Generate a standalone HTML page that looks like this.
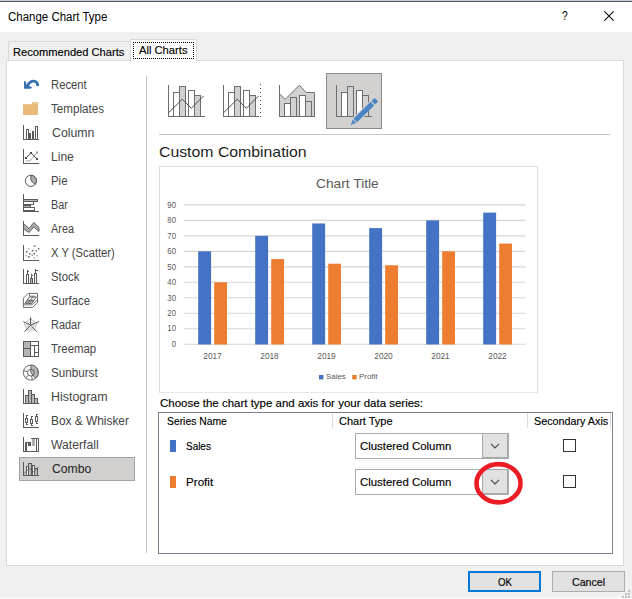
<!DOCTYPE html>
<html><head><meta charset="utf-8"><title>Change Chart Type</title>
<style>
*{box-sizing:border-box;margin:0;padding:0}
html,body{width:632px;height:599px;overflow:hidden;background:#f0f0f0}
body{position:relative;font-family:"Liberation Sans",sans-serif;font-size:12px;color:#000}
.a{position:absolute;white-space:pre;line-height:1}
.t{position:absolute;white-space:pre;line-height:14px;height:14px;font-size:11px;-webkit-text-stroke:0.15px currentColor}
.li{position:absolute;left:51px;white-space:pre;line-height:14px;height:14px;color:#444;font-size:12px}
.ax{position:absolute;left:159.500px;width:16px;text-align:right;white-space:pre;line-height:10px;height:10px;transform-origin:100% 50%;transform:scaleX(0.94);font-size:8.3px;color:#595959}
.yr{position:absolute;top:351px;width:41px;text-align:center;white-space:pre;line-height:10px;height:10px;font-size:8.3px;color:#595959}
.lg{position:absolute;top:372px;white-space:pre;line-height:10px;height:10px;font-size:7.9px;color:#595959}
</style></head><body>
<!-- window chrome -->
<div class="a" style="left:0;top:0;width:632px;height:1px;background:#c5cde0"></div>
<div class="a" style="left:0;top:1px;width:632px;height:1px;background:#585858"></div>
<div class="a" style="left:0;top:2px;width:632px;height:30px;background:#fff"></div>
<div class="t" id="title" style="left:8px;top:10px;font-size:12px;-webkit-text-stroke:0;transform-origin:0 0;transform:scaleX(0.9567);margin-left:0.00px">Change Chart Type</div>
<div class="t" style="left:562px;top:9px;font-size:13px;-webkit-text-stroke:0;transform-origin:0 0;transform:scaleX(0.8)">?</div>
<svg class="a" style="left:604px;top:11px" width="10" height="10" viewBox="0 0 10 10"><path d="M0.300 0.300L9.700 9.700M9.700 0.300L0.300 9.700" stroke="#111" stroke-width="1.100" fill="none"/></svg>

<div class="a" style="left:0;top:597px;width:632px;height:1px;background:#f6f6f6"></div>
<div class="a" style="left:0;top:598px;width:632px;height:1px;background:#fdfdfd"></div>
<!-- tabs -->
<div class="a" style="left:8px;top:41px;width:123px;height:20px;border:1px solid #d9d9d9;border-bottom:none;background:#f0f0f0"></div>
<div class="t" id="tab1" style="left:13px;top:45px;transform-origin:0 0;transform:scaleX(1.0118);margin-left:0.00px">Recommended Charts</div>
<!-- panel -->
<div class="a" style="left:6px;top:60px;width:618px;height:506px;background:#fff;border:1px solid #d9d9d9"></div>
<div class="a" style="left:130px;top:39px;width:67px;height:22px;border:1px solid #d9d9d9;border-bottom:none;background:#fff"></div>
<div class="a" style="left:133px;top:42px;width:61px;height:17px;border:1px dotted #000"></div>
<div class="t" id="tab2" style="left:139px;top:43px;transform-origin:0 0;transform:scaleX(1.0167);margin-left:0.00px">All Charts</div>

<!-- left list -->
<div class="a" style="left:19px;top:457px;width:116px;height:24px;background:#d1d0cf;border:1px solid #a3a3a3"></div>
<div class="li" id="l0" style="top:78px;transform-origin:0 0;transform:scaleX(0.9405);margin-left:0.00px">Recent</div>
<div class="li" id="l1" style="top:102px;transform-origin:0 0;transform:scaleX(0.9691);margin-left:0.00px">Templates</div>
<div class="li" id="l2" style="top:126px;transform-origin:0 0;transform:scaleX(1.0244);margin-left:0.54px">Column</div>
<div class="li" id="l3" style="top:150px;transform-origin:0 0;transform:scaleX(1.0048);margin-left:0.00px">Line</div>
<div class="li" id="l4" style="top:174px;transform-origin:0 0;transform:scaleX(0.9500);margin-left:0.00px">Pie</div>
<div class="li" id="l5" style="top:198px;transform-origin:0 0;transform:scaleX(0.9000);margin-left:0.00px">Bar</div>
<div class="li" id="l6" style="top:222px;transform-origin:0 0;transform:scaleX(0.9077);margin-left:0.00px">Area</div>
<div class="li" id="l7" style="top:246px;transform-origin:0 0;transform:scaleX(0.9353);margin-left:0.00px">X Y (Scatter)</div>
<div class="li" id="l8" style="top:270px;transform-origin:0 0;transform:scaleX(0.9467);margin-left:0.00px">Stock</div>
<div class="li" id="l9" style="top:294px;transform-origin:0 0;transform:scaleX(0.9415);margin-left:0.00px">Surface</div>
<div class="li" id="l10" style="top:318px;transform-origin:0 0;transform:scaleX(0.9125);margin-left:0.00px">Radar</div>
<div class="li" id="l11" style="top:342px;transform-origin:0 0;transform:scaleX(0.9479);margin-left:0.00px">Treemap</div>
<div class="li" id="l12" style="top:366px;transform-origin:0 0;transform:scaleX(0.9708);margin-left:0.00px">Sunburst</div>
<div class="li" id="l13" style="top:390px;transform-origin:0 0;transform:scaleX(1.0358);margin-left:0.00px">Histogram</div>
<div class="li" id="l14" style="top:414px;transform-origin:0 0;transform:scaleX(0.9897);margin-left:0.00px">Box &amp; Whisker</div>
<div class="li" id="l15" style="top:438px;transform-origin:0 0;transform:scaleX(1.0174);margin-left:0.00px">Waterfall</div>
<div class="li" id="l16" style="top:462px;color:#222;transform-origin:0 0;transform:scaleX(1.0184);margin-left:0.54px">Combo</div>
<div class="a" style="left:146px;top:76px;width:1px;height:477px;background:#c6c6c6"></div>

<!-- right side -->
<div class="a" style="left:159px;top:134px;width:451px;height:1px;background:#c6c6c6"></div>
<div class="t" id="cc" style="left:159px;top:142px;font-size:15px;-webkit-text-stroke:0;line-height:20px;height:20px;color:#1e1e1e;transform-origin:0 0;transform:scaleX(1.0543);margin-left:0.00px">Custom Combination</div>

<!-- chart preview -->
<div class="a" style="left:159px;top:166px;width:379px;height:227px;background:#fff;border:1px solid #dcdcdc;border-bottom-color:#e8e8e8"></div>

<div class="t" id="choose" style="left:160px;top:396px;transform-origin:0 0;transform:scaleX(1.0442);margin-left:0.00px">Choose the chart type and axis for your data series:</div>
<div class="a" style="left:158px;top:412px;width:455px;height:142px;background:#fff;border:1px solid #7a808c"></div>

<svg class="a" style="left:0;top:0" width="632" height="599" viewBox="0 0 632 599" fill="none">
<!-- ===== left list icons ===== -->
<g id="ic-recent">
<path d="M37.600 86 C37.900 82.800 36 81.200 33.600 81.200 C30.800 81.200 28.600 83.300 27 86.200" stroke="#3570ae" stroke-width="2.800" fill="none"/>
<path d="M24 88.800 V81.600 L25.600 80.800 L26.300 84.800 L32.200 87.200 L30.600 88.800 Z" fill="#3570ae"/>
</g>
<g id="ic-templates">
<path d="M23 104.2 H31.3 L32.6 101.9 H38 V115 H23 Z" fill="#e8bb79"/>
<path d="M33.2 103 H37.2" stroke="#f6e3c4" stroke-width="0.8"/>
</g>
<g id="ic-column" stroke="#5a5a5a" stroke-width="1" shape-rendering="crispEdges">
<path d="M23.5 125 V139.5 H39"/>
<rect x="26.5" y="129.5" width="2" height="10"/>
<rect x="29.5" y="133.5" width="1" height="6" fill="#5a5a5a"/>
<rect x="32.5" y="131.5" width="1" height="8" fill="#5a5a5a"/>
<rect x="35.5" y="126.5" width="2" height="13"/>
</g>
<g id="ic-line">
<path d="M23.5 149 V163.5 H39" stroke="#5a5a5a" shape-rendering="crispEdges"/>
<path d="M26 161 H30 L37 152.5" stroke="#9a9a9a" stroke-width="0.9"/>
<path d="M26 158 L31 152.8 L37 159" stroke="#4a4a4a" stroke-width="1"/>
<rect x="25" y="157" width="2" height="2" fill="#4a4a4a"/><rect x="30" y="152" width="2" height="2" fill="#4a4a4a"/><rect x="36" y="158" width="2" height="2" fill="#4a4a4a"/>
<rect x="36" y="151.5" width="2" height="2" fill="#9a9a9a"/>
</g>
<g id="ic-pie">
<circle cx="30.9" cy="180.8" r="5.6" fill="#fff" stroke="#5a5a5a" stroke-width="1"/>
<path d="M30.9 180.8 V175.2 A5.6 5.6 0 0 1 35.2 184.4 Z" fill="#ababab" stroke="#5a5a5a" stroke-width="0.9"/>
</g>
<g id="ic-bar" stroke="#5a5a5a" shape-rendering="crispEdges">
<path d="M23.5 193.5 V211.5 H39"/>
<rect x="23.5" y="199.5" width="14" height="2" fill="#b5b5b5"/>
<rect x="23.5" y="201.5" width="10" height="3" fill="#fff"/>
<rect x="23.5" y="205.5" width="7" height="2" fill="#b5b5b5"/>
<rect x="23.5" y="207.5" width="11" height="3" fill="#fff"/>
</g>
<g id="ic-area">
<path d="M23.5 223.5 L29.1 228.6 L33.8 222.4 L39 227.4 V231.5 L33.8 226.9 L29.1 232.5 L23.5 229 Z" fill="#ababab" stroke="#5a5a5a" stroke-width="0.9"/>
<path d="M23.5 221 V235.5 H39" stroke="#5a5a5a" shape-rendering="crispEdges"/>
</g>
<g id="ic-scatter">
<path d="M23.5 245 V260.5 H39" stroke="#5a5a5a" shape-rendering="crispEdges"/>
<g fill="#6a6a6a">
<rect x="33.5" y="245.5" width="2" height="1.2"/><rect x="28" y="248" width="1.4" height="1.4" fill="#aaa"/><rect x="38" y="248" width="1.4" height="1.4"/>
<rect x="31.8" y="249.8" width="1.6" height="1.6"/><rect x="26" y="251" width="1.6" height="1.6"/><rect x="35.5" y="250" width="1.6" height="1.6" fill="#888"/>
<rect x="29" y="253" width="1.6" height="1.6"/><rect x="33.5" y="253" width="1.6" height="1.6"/><rect x="25.5" y="255" width="1.4" height="1.4" fill="#aaa"/>
<rect x="31.5" y="254.6" width="1.4" height="1.4" fill="#888"/><rect x="36.5" y="255" width="1.4" height="1.4" fill="#aaa"/><rect x="28" y="256" width="1.6" height="1.6"/><rect x="33.6" y="257" width="1.4" height="1.4" fill="#aaa"/>
</g>
</g>
<g id="ic-stock" stroke="#5a5a5a" shape-rendering="crispEdges">
<path d="M23.5 269 V283.5 H39"/>
<rect x="26.5" y="274.5" width="2" height="9" fill="#fff"/><path d="M27.5 270 V274.5 M27.5 271.5 H29"/>
<rect x="30.5" y="278.5" width="2" height="5" fill="#b5b5b5"/><path d="M31.5 273.5 V278.5 M31.5 275.5 H33"/>
<rect x="34.5" y="273.5" width="2" height="10" fill="#fff"/><path d="M35.5 269 V273.5 M35.5 270.5 H38"/>
</g>
<g id="ic-surface" stroke="#626262" stroke-width="0.950">
<path d="M28.200 293.400 H37.500 V302.600 L32.700 307.400 H23.400 V298.200 Z" fill="#fff"/>
<path d="M29.500 293.400 V296.200 H35.400 M23.400 304.800 H31.900 L37.500 299.800" stroke="#7a7a7a"/>
<path d="M24.800 303.600 L27.100 300.300 H34 L31.700 303.600 Z" fill="#a8a8a8"/>
<path d="M27.100 300.300 L29.400 297 H36.300 L34 300.300 Z" fill="#f4f4f4"/>
<path d="M28.250 303.600 L32.850 297" stroke="#626262" stroke-width="0.800"/>
</g>
<g id="ic-radar">
<path d="M30.6 318.8 L36.8 323.2 L34.4 330 H26.8 L24.4 323.2 Z M30.6 321.6 L34.2 324.2 L32.8 328 H28.4 L27 324.2 Z" stroke="#a8a8a8" stroke-width="0.8"/>
<path d="M30.6 325.2 V317 M30.6 325.2 L39 321.5 M30.6 325.2 L36.7 331.8 M30.6 325.2 L24.4 331.8 M30.6 325.2 L23.2 321.5" stroke="#5a5a5a" stroke-width="1"/>
</g>
<g id="ic-treemap" stroke="#5a5a5a" shape-rendering="crispEdges">
<rect x="23.5" y="341.5" width="15" height="15" fill="#fff"/>
<rect x="23.5" y="341.5" width="7" height="7" fill="#b5b5b5"/>
<rect x="23.5" y="348.5" width="7" height="8" fill="#b5b5b5"/>
<path d="M30.5 345.5 H38.5 M34.5 345.5 V356.5 M34.5 352.5 H38.5"/>
</g>
<g id="ic-sunburst" stroke="#5a5a5a" stroke-width="0.9">
<circle cx="30.9" cy="372.6" r="7.5" fill="#fff"/>
<path d="M30.9 365.1 A7.5 7.5 0 0 1 35.6 378.4 L30.9 372.6 Z" fill="#b5b5b5"/>
<circle cx="30.9" cy="372.6" r="3.4"/>
<path d="M27.6 371.8 L23.6 370.6 M28.6 375.2 L25.6 377.9 M31.6 376 L32.4 380"/>
</g>
<g id="ic-hist" stroke="#5a5a5a" shape-rendering="crispEdges">
<path d="M23.5 389 V403.5 H39"/>
<rect x="25.5" y="395.5" width="3" height="8" fill="#b5b5b5"/>
<rect x="28.5" y="390.5" width="3" height="13" fill="#b5b5b5"/>
<rect x="31.5" y="394.5" width="3" height="9" fill="#b5b5b5"/>
<rect x="34.5" y="398.5" width="3" height="5" fill="#b5b5b5"/>
</g>
<g id="ic-box" stroke="#5a5a5a" shape-rendering="crispEdges">
<path d="M23.5 413 V427.5 H39"/>
<path d="M26.5 415 V424 M25.5 415.5 H28 M25.5 424.5 H28"/><rect x="25.5" y="418.5" width="2" height="4" fill="#fff"/>
<path d="M31.5 416 V425 M30.5 416.5 H33 M30.5 425.5 H33"/><rect x="30.5" y="419.5" width="2" height="4" fill="#fff"/>
<path d="M36.5 414 V423 M35.5 414.5 H38 M35.5 423.5 H38"/><rect x="35.5" y="416.5" width="2" height="5" fill="#fff"/>
</g>
<g id="ic-waterfall" shape-rendering="crispEdges">
<path d="M23.5 437 V451.5 H39" stroke="#5a5a5a"/>
<rect x="24.5" y="442" width="2" height="9.5" fill="#5a5a5a"/>
<rect x="24.5" y="442" width="6" height="1" fill="#5a5a5a"/>
<rect x="28" y="442" width="3" height="4" fill="#5a5a5a"/>
<rect x="32" y="438" width="3" height="8" fill="#b0b0b0"/>
<rect x="36.5" y="438.5" width="2" height="13" fill="#fff" stroke="#5a5a5a"/>
<rect x="31" y="438" width="6" height="1" fill="#5a5a5a"/>
</g>
<g id="ic-combo">
<g stroke="#5a5a5a" shape-rendering="crispEdges">
<path d="M23.5 462 V475.5 H39"/>
<rect x="26.5" y="466.5" width="2" height="9" fill="#fff"/>
<rect x="28.5" y="463.5" width="3" height="12" fill="#bdbdbd"/>
<rect x="32.500" y="465.5" width="2" height="10" fill="#fff"/>
<rect x="34.5" y="468.5" width="3" height="7" fill="#bdbdbd"/>
</g>
<path d="M23.5 474 L29.5 468.2 L33.4 472 L38.6 466.8" stroke="#5a5a5a" stroke-width="0.9"/>
</g>
<!-- ===== top thumbnails ===== -->
<g id="th1">
<g stroke="#6e6e6e" shape-rendering="crispEdges">
<rect x="173.5" y="92.500" width="6" height="24" fill="#fff"/>
<rect x="179.5" y="86.500" width="6" height="30" fill="#d2d1d0"/>
<rect x="188.5" y="90.500" width="6" height="26" fill="#fff"/>
<rect x="194.5" y="95.500" width="6" height="21" fill="#d2d1d0"/>
<path d="M168.500 85 V116.500 H205"/>
</g>
<path d="M168.500 112.800 L182.300 99.200 L191.300 108.300 L203.500 96" stroke="#4c4c4c" stroke-width="1"/>
</g>
<g id="th2">
<g stroke="#6e6e6e" shape-rendering="crispEdges">
<rect x="228.500" y="92.500" width="6" height="24" fill="#fff"/>
<rect x="234.500" y="86.500" width="6" height="30" fill="#d2d1d0"/>
<rect x="243.500" y="90.500" width="6" height="26" fill="#fff"/>
<rect x="249.500" y="95.500" width="6" height="21" fill="#d2d1d0"/>
<path d="M223.500 85 V116.500 H259"/>
<path d="M260.500 84 V117" stroke="#555" stroke-dasharray="1 3"/>
</g>
<path d="M223.500 112.800 L237.300 99.200 L246.300 108.300 L258.500 96" stroke="#4c4c4c" stroke-width="1"/>
</g>
<g id="th3">
<path d="M279.500 93.700 L285.200 99.400 L299.400 85.200 L306 92.500 H314.500 V116.500 H279.500 Z" fill="#d2d1d0" stroke="#6e6e6e" stroke-width="1"/>
<g stroke="#6e6e6e" shape-rendering="crispEdges">
<rect x="284.500" y="103.500" width="6" height="13" fill="#fff"/>
<rect x="290.500" y="97.500" width="6" height="19" fill="#d2d1d0"/>
<rect x="299.500" y="95.500" width="6" height="21" fill="#fff"/>
<rect x="305.500" y="101.500" width="6" height="15" fill="#d2d1d0"/>
<path d="M279.500 85 V116.500 H315"/>
</g>
</g>
<g id="th4">
<rect x="326.500" y="73.500" width="55" height="55" fill="#d2d1d0" stroke="#8a8a8a" shape-rendering="crispEdges"/>
<g stroke="#6e6e6e" shape-rendering="crispEdges">
<rect x="341.500" y="92.500" width="6" height="24" fill="#fff"/>
<rect x="347.500" y="86.500" width="6" height="30" fill="#d2d1d0"/>
<rect x="356.500" y="90.500" width="6" height="26" fill="#fff"/>
<rect x="362.500" y="95.500" width="6" height="21" fill="#d2d1d0"/>
<path d="M336.500 85 V116.500 H372"/>
</g>
<!-- pencil -->
<g transform="translate(350.700 124.900) rotate(-44.500)">
<path d="M-1.500 0 L5.400 -3.600 H37 V3.600 H5.400 Z" fill="#d2d1d0"/>
<path d="M0 0 L5.400 -2.400 V2.400 Z" fill="#4a86c6"/>
<rect x="6.400" y="-2.500" width="24" height="5" fill="#4a86c6"/>
<rect x="31.600" y="-2.500" width="4.400" height="5" fill="#4a86c6"/>
</g>
<path d="M365 116.500 H372 M368.500 111 V116.500" stroke="#6e6e6e" shape-rendering="crispEdges"/>
</g>
<!-- ===== chart preview ===== -->
<g id="chart">
<g stroke="#d6d6d6" stroke-width="1.150">
<path d="M184 344.200 H525.500"/>
<path d="M184 328.720 H525.500"/>
<path d="M184 313.240 H525.500"/>
<path d="M184 297.760 H525.500"/>
<path d="M184 282.280 H525.500"/>
<path d="M184 266.800 H525.500"/>
<path d="M184 251.320 H525.500"/>
<path d="M184 235.840 H525.500"/>
<path d="M184 220.360 H525.500"/>
<path d="M184 204.880 H525.500"/>
</g>
<g>
<rect x="198.200" y="251.320" width="12.900" height="93.180" fill="#4472c4"/>
<rect x="214.200" y="282.280" width="12.800" height="62.220" fill="#ed7d31"/>
<rect x="255.200" y="235.840" width="12.900" height="108.660" fill="#4472c4"/>
<rect x="271.200" y="259.060" width="12.800" height="85.440" fill="#ed7d31"/>
<rect x="312.200" y="223.456" width="12.900" height="121.044" fill="#4472c4"/>
<rect x="328.200" y="263.704" width="12.800" height="80.796" fill="#ed7d31"/>
<rect x="369.200" y="228.100" width="12.900" height="116.400" fill="#4472c4"/>
<rect x="385.200" y="265.252" width="12.800" height="79.248" fill="#ed7d31"/>
<rect x="426.200" y="220.360" width="12.900" height="124.140" fill="#4472c4"/>
<rect x="442.200" y="251.320" width="12.800" height="93.180" fill="#ed7d31"/>
<rect x="483.200" y="212.620" width="12.900" height="131.880" fill="#4472c4"/>
<rect x="499.200" y="243.580" width="12.800" height="100.920" fill="#ed7d31"/>
</g>
<rect x="319" y="375" width="4.400" height="4.400" fill="#4472c4"/><rect x="352.300" y="375" width="4.400" height="4.400" fill="#ed7d31"/>
</g>
</svg>
<!-- chart text -->
<div class="t" id="ctitle" style="left:316px;top:176px;font-size:13px;-webkit-text-stroke:0;line-height:16px;height:16px;color:#595959;transform-origin:0 0;transform:scaleX(1.0593);margin-left:0.00px">Chart Title</div>
<div class="ax" style="top:199.6px">90</div>
<div class="ax" style="top:215.1px">80</div>
<div class="ax" style="top:230.5px">70</div>
<div class="ax" style="top:246.0px">60</div>
<div class="ax" style="top:261.5px">50</div>
<div class="ax" style="top:277.0px">40</div>
<div class="ax" style="top:292.5px">30</div>
<div class="ax" style="top:307.9px">20</div>
<div class="ax" style="top:323.4px">10</div>
<div class="ax" style="top:338.9px">0</div>
<div class="yr" style="left:192px">2017</div>
<div class="yr" style="left:249px">2018</div>
<div class="yr" style="left:306px">2019</div>
<div class="yr" style="left:363px">2020</div>
<div class="yr" style="left:420px">2021</div>
<div class="yr" style="left:477px">2022</div>
<div class="lg" style="left:326px">Sales</div>
<div class="lg" style="left:359px">Profit</div>

<!-- series table -->
<div class="t" id="h1" style="left:166px;top:414px;transform-origin:0 0;transform:scaleX(0.9406);margin-left:0.72px">Series Name</div>
<div class="t" id="h2" style="left:339px;top:414px;transform-origin:0 0;transform:scaleX(1.0000);margin-left:0.00px">Chart Type</div>
<div class="t" id="h3" style="left:534px;top:414px;transform-origin:0 0;transform:scaleX(0.9784);margin-left:0.00px">Secondary Axis</div>
<div class="a" style="left:332px;top:413px;width:1px;height:15px;background:#dcdcdc"></div>
<div class="a" style="left:527px;top:413px;width:1px;height:15px;background:#dcdcdc"></div>
<div class="a" style="left:610px;top:413px;width:1px;height:15px;background:#dcdcdc"></div>

<div class="a" style="left:170px;top:440px;width:6px;height:12px;background:#4472c4"></div>
<div class="t" id="s1" style="left:186px;top:439px;transform-origin:0 0;transform:scaleX(0.9036);margin-left:0.00px">Sales</div>
<div class="a" style="left:170px;top:476px;width:6px;height:12px;background:#ed7d31"></div>
<div class="t" id="s2" style="left:186px;top:475px;transform-origin:0 0;transform:scaleX(1.0577);margin-left:0.00px">Profit</div>

<div class="a" style="left:355px;top:433px;width:154px;height:26px;background:#fff;border:1px solid #ababab"></div>
<div class="a" style="left:482px;top:433px;width:27px;height:26px;background:#e1e1e1;border:1px solid #a9a9ab;border-right-width:2px;border-bottom-width:2px"></div>
<div class="t" id="d1" style="left:360px;top:439px;transform-origin:0 0;transform:scaleX(1.0364);margin-left:0.00px">Clustered Column</div>
<div class="a" style="left:355px;top:469px;width:154px;height:26px;background:#fff;border:1px solid #ababab"></div>
<div class="a" style="left:482px;top:469px;width:27px;height:26px;background:#e1e1e1;border:1px solid #a9a9ab;border-right-width:2px;border-bottom-width:2px"></div>
<div class="t" id="d2" style="left:360px;top:475px;transform-origin:0 0;transform:scaleX(1.0364);margin-left:0.00px">Clustered Column</div>

<div class="a" style="left:563px;top:439px;width:13px;height:13px;background:#fff;border:1px solid #333"></div>
<div class="a" style="left:563px;top:475px;width:13px;height:13px;background:#fff;border:1px solid #333"></div>

<svg class="a" style="left:460px;top:430px" width="80" height="90" viewBox="460 430 80 90" fill="none">
<path d="M491 443.800 L495 447.900 L499 443.800" stroke="#444" stroke-width="1.1"/>
<path d="M491 479.800 L495 483.900 L499 479.800" stroke="#444" stroke-width="1.1"/>
<ellipse cx="498.500" cy="483.250" rx="22" ry="19.150" stroke="#ec1c24" stroke-width="4.600"/>
</svg>

<!-- buttons -->
<div class="a" style="left:468px;top:571px;width:73px;height:21px;background:#e1e1e1;border:2px solid #0078d7"></div>
<div class="t" id="ok" style="left:498px;top:575px;transform-origin:0 0;transform:scaleX(0.8812);margin-left:0.00px">OK</div>
<div class="a" style="left:552px;top:571px;width:73px;height:21px;background:#e1e1e1;border:1px solid #adadad"></div>
<div class="t" id="cancel" style="left:571px;top:575px;transform-origin:0 0;transform:scaleX(0.9676);margin-left:0.54px">Cancel</div>
<svg class="a" style="left:620px;top:588px" width="12" height="11" viewBox="620 588 12 11" shape-rendering="crispEdges" fill="#bfbfbf">
<rect x="628" y="590" width="2" height="2"/><rect x="625" y="593" width="2" height="2"/><rect x="628" y="593" width="2" height="2"/>
<rect x="622" y="596" width="2" height="2"/><rect x="625" y="596" width="2" height="2"/><rect x="628" y="596" width="2" height="2"/>
</svg>
</body></html>
